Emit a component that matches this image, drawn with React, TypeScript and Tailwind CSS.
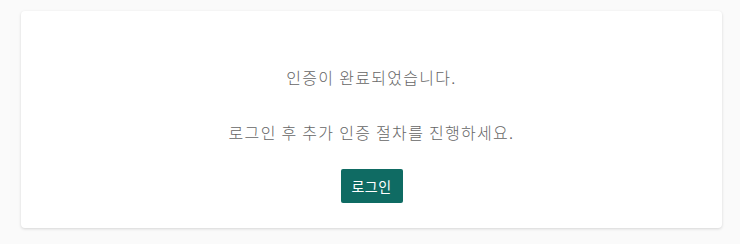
export default function App() {
  return (
    <div className="min-h-[244px] w-full bg-[#fafafa] pt-[11px] pl-[21px] font-['Noto_Sans_CJK_KR','Noto_Sans',sans-serif]">
      <div className="flex h-[217px] w-[701px] flex-col items-center rounded-[4px] bg-white pt-[54px] shadow-[0_1px_3px_rgba(0,0,0,0.15)]">
        <p className="text-[16px] leading-[24px] font-light tracking-[1.3px] text-[#666666]">
          인증이 완료되었습니다.
        </p>
        <p className="mt-[31px] text-[16px] leading-[24px] font-light tracking-[1.3px] text-[#666666]">
          로그인 후 추가 인증 절차를 진행하세요.
        </p>
        <button className="mt-[25px] h-[34px] w-[62px] rounded-[2px] bg-[#0f6b63] text-[14px] tracking-[0.5px] text-white">
          로그인
        </button>
      </div>
    </div>
  );
}
